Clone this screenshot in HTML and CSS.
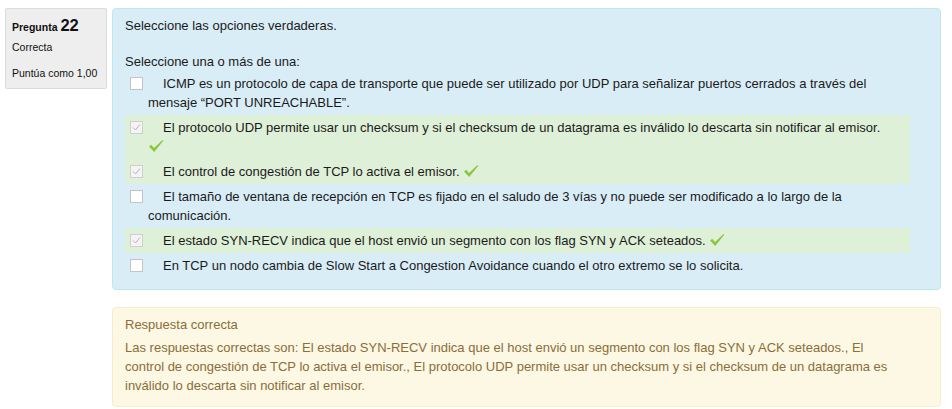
FILE: index.html
```html
<!DOCTYPE html>
<html lang="es">
<head>
<meta charset="utf-8">
<title>Pregunta 22</title>
<link rel="stylesheet" href="styles.css">
</head>
<body>
<div class="que">
  <div class="info">
    <h3 class="no">Pregunta <span class="qno">22</span></h3>
    <div class="state">Correcta</div>
    <div class="grade">Puntúa como 1,00</div>
  </div>
  <div class="content">
    <div class="formulation">
      <p class="qtext">Seleccione las opciones verdaderas.</p>
      <div class="ablock">
        <div class="prompt">Seleccione una o más de una:</div>
        <div class="answer">
          <div class="row"><span class="cb"></span>ICMP es un protocolo de capa de transporte que puede ser utilizado por UDP para señalizar puertos cerrados a través del mensaje “PORT UNREACHABLE”.</div>
          <div class="row correct"><span class="cb checked"><svg viewBox="0 0 13 13" width="13" height="13"><path d="M3 6.5 L5.5 9 L10 3.5" fill="none" stroke="#b4b4b4" stroke-width="1"/></svg></span>El protocolo UDP permite usar un checksum y si el checksum de un datagrama es inválido lo descarta sin notificar al emisor. <svg class="tick" viewBox="0 0 16 14" width="16" height="14"><path d="M1 7.5 L3.2 5.8 L6 9 L14.5 1 L15.3 1.8 L6.2 13 Z" fill="#8cc63f"/></svg></div>
          <div class="row correct"><span class="cb checked"><svg viewBox="0 0 13 13" width="13" height="13"><path d="M3 6.5 L5.5 9 L10 3.5" fill="none" stroke="#b4b4b4" stroke-width="1"/></svg></span>El control de congestión de TCP lo activa el emisor. <svg class="tick" viewBox="0 0 16 14" width="16" height="14"><path d="M1 7.5 L3.2 5.8 L6 9 L14.5 1 L15.3 1.8 L6.2 13 Z" fill="#8cc63f"/></svg></div>
          <div class="row"><span class="cb"></span>El tamaño de ventana de recepción en TCP es fijado en el saludo de 3 vías y no puede ser modificado a lo largo de la comunicación.</div>
          <div class="row correct"><span class="cb checked"><svg viewBox="0 0 13 13" width="13" height="13"><path d="M3 6.5 L5.5 9 L10 3.5" fill="none" stroke="#b4b4b4" stroke-width="1"/></svg></span>El estado SYN-RECV indica que el host envió un segmento con los flag SYN y ACK seteados. <svg class="tick" viewBox="0 0 16 14" width="16" height="14"><path d="M1 7.5 L3.2 5.8 L6 9 L14.5 1 L15.3 1.8 L6.2 13 Z" fill="#8cc63f"/></svg></div>
          <div class="row"><span class="cb"></span>En TCP un nodo cambia de Slow Start a Congestion Avoidance cuando el otro extremo se lo solicita.</div>
        </div>
      </div>
    </div>
    <div class="outcome">
      <div class="feedback-title">Respuesta correcta</div>
      <div class="rightanswer">Las respuestas correctas son: El estado SYN-RECV indica que el host envió un segmento con los flag SYN y ACK seteados., El control de congestión de TCP lo activa el emisor., El protocolo UDP permite usar un checksum y si el checksum de un datagrama es inválido lo descarta sin notificar al emisor.</div>
    </div>
  </div>
</div>
</body>
</html>
```

FILE: styles.css
```css
html, body {
  margin: 0;
  padding: 0;
  background: #fff;
}
body {
  font-family: "Liberation Sans", Arial, sans-serif;
  font-size: 13px;
  line-height: 19px;
  color: #1a1a1a;
  padding: 8px 11px 0 5px;
}
.que {
  display: flex;
  align-items: flex-start;
  gap: 5px;
}
.info {
  width: 88px;
  flex: none;
  background: #eee;
  border: 1px solid #dcdcdc;
  border-radius: 2px;
  padding: 6px 6px 8px 6px;
  font-size: 10.5px;
  line-height: 14px;
  color: #111;
}
.info .no {
  margin: 0 0 3px 0;
  font-size: 10.5px;
  font-weight: bold;
  line-height: 20px;
}
.info .qno {
  font-size: 16.5px;
}
.info .state {
  margin-bottom: 12px;
}
.content {
  flex: 1;
  display: flex;
  flex-direction: column;
  gap: 17px;
}
.formulation {
  background: #d9edf7;
  border: 1px solid #bce8f1;
  border-radius: 4px;
  padding: 7px 30px 11px 12px;
}
.qtext {
  margin: 0 0 17px 0;
}
.answer {
  display: flex;
  flex-direction: column;
}
.row {
  padding: 3px 18px 3px 23px;
  line-height: 19px;
  text-indent: -18px;
}
.row.correct {
  background: #dff0d8;
}
.cb {
  display: inline-block;
  box-sizing: border-box;
  width: 13px;
  height: 13px;
  border: 1px solid #c4c4c4;
  background: #fff;
  margin-right: 20px;
  vertical-align: -2px;
  text-indent: 0;
  position: relative;
}
.cb.checked {
  background: #f4f4f4;
  border-color: #cfcfcf;
}
.cb svg {
  position: absolute;
  left: -1px;
  top: -1px;
}
.tick {
  vertical-align: -2px;
}
.outcome {
  background: #fcf8e3;
  border: 1px solid #faebcc;
  border-radius: 4px;
  color: #8a6d3b;
  padding: 7px 35px 11px 12px;
}
.feedback-title {
  margin-bottom: 4px;
}
```
